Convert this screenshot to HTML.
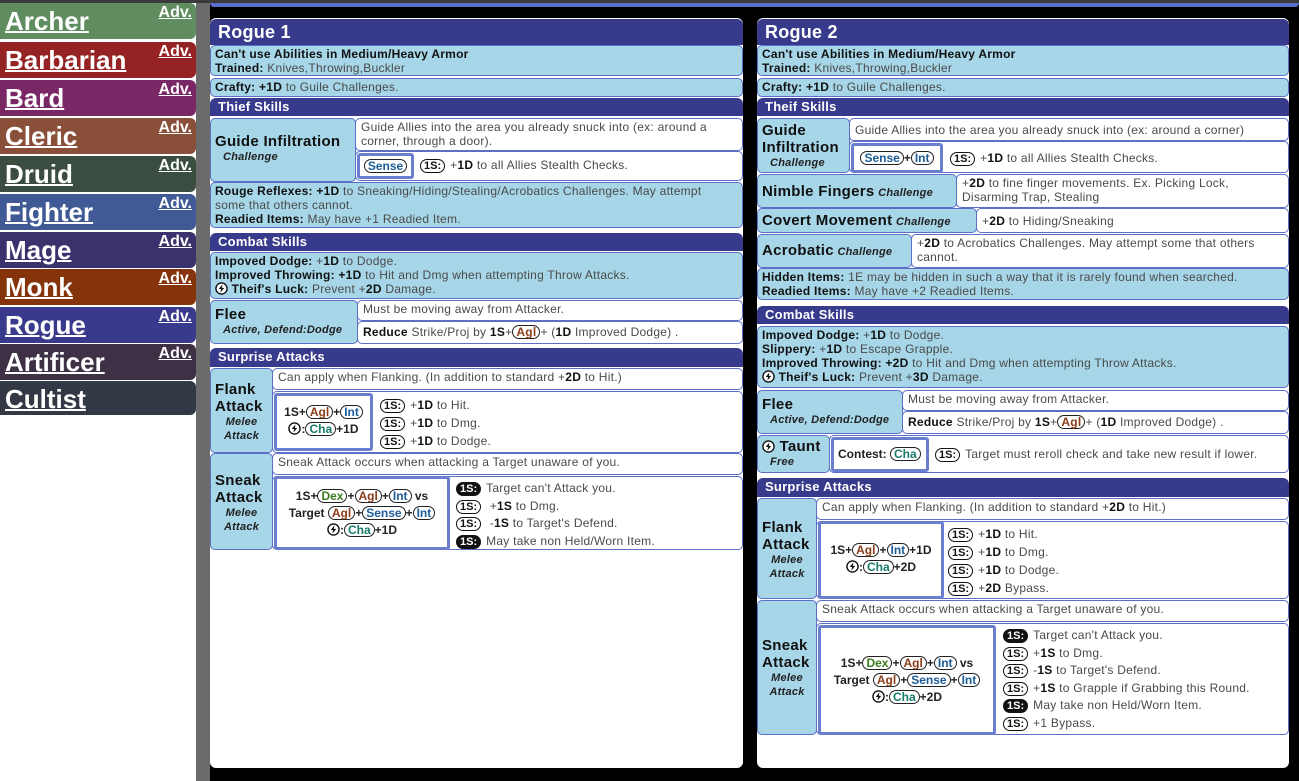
<!DOCTYPE html><html><head><meta charset="utf-8"><style>
*{box-sizing:border-box;margin:0;padding:0}
body{width:1299px;height:781px;overflow:hidden;background:#000;font-family:"Liberation Sans",sans-serif;font-size:12px;letter-spacing:0.25px;color:#4a4a4a;position:relative}
.a{position:absolute}
#side{left:0;top:0;width:196px;height:781px;background:#fff}
#gap{left:196px;top:0;width:14px;height:781px;background:#6b6b6b}
#topg{left:0;top:0;width:1299px;height:3px;background:#3a3a3a}
.it{position:absolute;left:0;width:196px;height:36px;border-radius:0 6px 6px 0;color:#fff}
.it b{position:absolute;left:5px;top:3px;font-size:26px;color:#fff;text-decoration:underline;text-decoration-thickness:2px;font-weight:bold;letter-spacing:0}
.it i{position:absolute;right:4px;top:1px;font-size:16px;font-style:normal;font-weight:bold;text-decoration:underline;letter-spacing:0}
.card{position:absolute;top:18px;height:750px;background:#fff;border-radius:6px}
.hd{position:absolute;background:#383b8c;color:#fff;font-weight:bold;font-size:13px;padding:1px 8px;border-radius:6px 6px 0 0}
.ti{font-size:18px;padding:3px 8px}
.lb{position:absolute;background:#a6d6e7;border:1px solid #5b6fc9;border-radius:5px;padding:1px 4px;line-height:14px}
.wb{position:absolute;background:#fff;border:1px solid #5b6fc9;border-radius:5px;padding:1px 5px;line-height:14px}
.fb{position:absolute;background:#fff;border:3px solid #6a7ed0;border-radius:3px;text-align:center;font-weight:bold;color:#222;line-height:17px;letter-spacing:0}
b{color:#111}
.n{font-size:15px;font-weight:bold;color:#111;line-height:17px;letter-spacing:0.3px}
.s{font-style:italic;font-weight:bold;color:#222;font-size:11px}
.p{display:inline-block;border:1.5px solid #222;border-radius:8px;padding:0 3px;line-height:12px;font-weight:bold}
.k{display:inline-block;border:1.5px solid #111;border-radius:7px;padding:0 3px;line-height:12px;font-weight:bold;color:#111;font-size:11px;margin-right:5px;letter-spacing:0}
.kf{background:#111;color:#fff}
.ag{color:#8a3c18}.in{color:#1b5c98}.ch{color:#177a6a}.dx{color:#3b7d1c}
.z{display:inline-block;width:13px;height:13px;vertical-align:-2px}
</style></head><body>
<svg width="0" height="0" style="position:absolute"><symbol id="bolt" viewBox="0 0 14 14"><circle cx="7" cy="7" r="6" fill="#fff" stroke="#111" stroke-width="1.5"/><path d="M8 2.5L4 7.6h2.6L5.8 11.5 10 6.3H7.4z" fill="#111"/></symbol></svg>
<div class="a" id="side"></div><div class="a" id="gap"></div><div class="a" id="topg"></div>
<div class="it" style="top:3px;background:#5f8d5f"><b>Archer</b><i>Adv.</i></div>
<div class="it" style="top:42px;background:#962323"><b>Barbarian</b><i>Adv.</i></div>
<div class="it" style="top:80px;background:#7a2766"><b>Bard</b><i>Adv.</i></div>
<div class="it" style="top:118px;background:#8a4f39"><b>Cleric</b><i>Adv.</i></div>
<div class="it" style="top:156px;background:#3a4d40"><b>Druid</b><i>Adv.</i></div>
<div class="it" style="top:194px;background:#3f5a95"><b>Fighter</b><i>Adv.</i></div>
<div class="it" style="top:232px;background:#3a326d"><b>Mage</b><i>Adv.</i></div>
<div class="it" style="top:269px;background:#84330b"><b>Monk</b><i>Adv.</i></div>
<div class="it" style="top:307px;background:#393a8b"><b>Rogue</b><i>Adv.</i></div>
<div class="it" style="top:344px;background:#3e3146"><b>Artificer</b><i>Adv.</i></div>
<div class="it" style="top:381px;height:34px;background:#333944"><b>Cultist</b></div>
<div class="a" style="left:210px;top:3px;width:1089px;height:4px;background:#5b6fc9;border-radius:0 0 4px 4px"></div>

<!-- CARD 1 -->
<div class="card" style="left:210px;width:533px"></div>
<div class="hd ti" style="left:210px;top:19px;width:533px;height:26px">Rogue 1</div>
<div class="lb" style="left:210px;top:45px;width:533px;height:31px"><b>Can't use Abilities in Medium/Heavy Armor</b><br><b>Trained:</b> Knives,Throwing,Buckler</div>
<div class="lb" style="left:210px;top:78px;width:533px;height:19px"><b>Crafty: +1D</b> to Guile Challenges.</div>
<div class="hd" style="left:210px;top:98px;width:533px;height:18px">Thief Skills</div>
<div class="lb" style="left:210px;top:118px;width:146px;height:64px;padding-top:14px"><div class="n">Guide Infiltration</div><div class="s" style="padding-left:8px">Challenge</div></div>
<div class="wb" style="left:355px;top:118px;width:388px;height:33px">Guide Allies into the area you already snuck into (ex: around a corner, through a door).</div>
<div class="wb" style="left:355px;top:151px;width:388px;height:30px"></div>
<div class="fb" style="left:357px;top:153px;width:57px;height:26px;padding-top:2px"><span class="p in">Sense</span></div>
<div class="a" style="left:420px;top:158px"><span class="k">1S:</span>+<b>1D</b> to all Allies Stealth Checks.</div>
<div class="lb" style="left:210px;top:182px;width:533px;height:46px;padding-right:40px"><b>Rouge Reflexes: +1D</b> to Sneaking/Hiding/Stealing/Acrobatics Challenges. May attempt some that others cannot.<br><b>Readied Items:</b> May have +1 Readied Item.</div>
<div class="hd" style="left:210px;top:233px;width:533px;height:18px">Combat Skills</div>
<div class="lb" style="left:210px;top:252px;width:533px;height:47px"><b>Impoved Dodge:</b> +<b>1D</b> to Dodge.<br><b>Improved Throwing: +1D</b> to Hit and Dmg when attempting Throw Attacks.<br><svg class="z"><use href="#bolt"/></svg> <b>Theif's Luck:</b> Prevent +<b>2D</b> Damage.</div>
<div class="lb" style="left:210px;top:300px;width:148px;height:44px;padding-top:5px"><div class="n">Flee</div><div class="s" style="padding-left:8px">Active, Defend:Dodge</div></div>
<div class="wb" style="left:357px;top:300px;width:386px;height:21px">Must be moving away from Attacker.</div>
<div class="wb" style="left:357px;top:321px;width:386px;height:23px;padding-top:3px"><b>Reduce</b> Strike/Proj by <b>1S</b>+<span class="p ag">Agl</span>+ (<b>1D</b> Improved Dodge) .</div>
<div class="hd" style="left:210px;top:348px;width:533px;height:19px">Surprise Attacks</div>
<div class="lb" style="left:210px;top:368px;width:63px;height:85px;padding-top:12px"><div class="n">Flank Attack</div><div class="s" style="text-align:center">Melee<br>Attack</div></div>
<div class="wb" style="left:272px;top:368px;width:471px;height:22px">Can apply when Flanking. (In addition to standard +<b>2D</b> to Hit.)</div>
<div class="wb" style="left:272px;top:391px;width:471px;height:62px"></div>
<div class="fb" style="left:274px;top:393px;width:99px;height:58px;padding-top:8px">1S+<span class="p ag">Agl</span>+<span class="p in">Int</span><br><svg class="z"><use href="#bolt"/></svg>:<span class="p ch">Cha</span>+1D</div>
<div class="a" style="left:380px;top:396px;line-height:18px"><span class="k">1S:</span>+<b>1D</b> to Hit.<br><span class="k">1S:</span>+<b>1D</b> to Dmg.<br><span class="k">1S:</span>+<b>1D</b> to Dodge.</div>
<div class="lb" style="left:210px;top:453px;width:63px;height:97px;padding-top:18px"><div class="n">Sneak Attack</div><div class="s" style="text-align:center">Melee<br>Attack</div></div>
<div class="wb" style="left:272px;top:453px;width:471px;height:22px">Sneak Attack occurs when attacking a Target unaware of you.</div>
<div class="wb" style="left:272px;top:476px;width:471px;height:74px"></div>
<div class="fb" style="left:274px;top:476px;width:176px;height:74px;padding-top:9px">1S+<span class="p dx">Dex</span>+<span class="p ag">Agl</span>+<span class="p in">Int</span> vs<br>Target <span class="p ag">Agl</span>+<span class="p in">Sense</span>+<span class="p in">Int</span><br><svg class="z"><use href="#bolt"/></svg>:<span class="p ch">Cha</span>+1D</div>
<div class="a" style="left:456px;top:480px;line-height:17.5px"><span class="k kf">1S:</span>Target can't Attack you.<br><span class="k">1S:</span> +<b>1S</b> to Dmg.<br><span class="k">1S:</span> -<b>1S</b> to Target's Defend.<br><span class="k kf">1S:</span>May take non Held/Worn Item.</div>

<!-- CARD 2 -->
<div class="card" style="left:757px;width:532px"></div>
<div class="hd ti" style="left:757px;top:19px;width:532px;height:26px">Rogue 2</div>
<div class="lb" style="left:757px;top:45px;width:532px;height:31px"><b>Can't use Abilities in Medium/Heavy Armor</b><br><b>Trained:</b> Knives,Throwing,Buckler</div>
<div class="lb" style="left:757px;top:78px;width:532px;height:19px"><b>Crafty: +1D</b> to Guile Challenges.</div>
<div class="hd" style="left:757px;top:98px;width:532px;height:18px">Theif Skills</div>
<div class="lb" style="left:757px;top:118px;width:93px;height:55px;padding-top:3px"><div class="n">Guide Infiltration</div><div class="s" style="padding-left:8px">Challenge</div></div>
<div class="wb" style="left:849px;top:118px;width:440px;height:23px;padding-top:4px">Guide Allies into the area you already snuck into (ex: around a corner)</div>
<div class="wb" style="left:849px;top:141px;width:440px;height:32px"></div>
<div class="fb" style="left:851px;top:143px;width:92px;height:30px;padding-top:4px"><span class="p in">Sense</span>+<span class="p in">Int</span></div>
<div class="a" style="left:950px;top:151px"><span class="k">1S:</span>+<b>1D</b> to all Allies Stealth Checks.</div>
<div class="lb" style="left:757px;top:174px;width:200px;height:34px;padding-top:8px"><span class="n">Nimble Fingers</span> <span class="s">Challenge</span></div>
<div class="wb" style="left:956px;top:174px;width:333px;height:34px;padding-right:30px">+<b>2D</b> to fine finger movements. Ex. Picking Lock, Disarming Trap, Stealing</div>
<div class="lb" style="left:757px;top:208px;width:220px;height:25px;padding-top:3px"><span class="n">Covert Movement</span> <span class="s">Challenge</span></div>
<div class="wb" style="left:976px;top:208px;width:313px;height:25px;padding-top:5px">+<b>2D</b> to Hiding/Sneaking</div>
<div class="lb" style="left:757px;top:234px;width:155px;height:34px;padding-top:7px"><span class="n">Acrobatic</span> <span class="s">Challenge</span></div>
<div class="wb" style="left:911px;top:234px;width:378px;height:34px;padding-right:20px">+<b>2D</b> to Acrobatics Challenges. May attempt some that others cannot.</div>
<div class="lb" style="left:757px;top:268px;width:532px;height:32px"><b>Hidden Items:</b> 1E may be hidden in such a way that it is rarely found when searched.<br><b>Readied Items:</b> May have +2 Readied Items.</div>
<div class="hd" style="left:757px;top:306px;width:532px;height:18px">Combat Skills</div>
<div class="lb" style="left:757px;top:326px;width:532px;height:62px"><b>Impoved Dodge:</b> +<b>1D</b> to Dodge.<br><b>Slippery:</b> +<b>1D</b> to Escape Grapple.<br><b>Improved Throwing: +2D</b> to Hit and Dmg when attempting Throw Attacks.<br><svg class="z"><use href="#bolt"/></svg> <b>Theif's Luck:</b> Prevent +<b>3D</b> Damage.</div>
<div class="lb" style="left:757px;top:390px;width:146px;height:44px;padding-top:5px"><div class="n">Flee</div><div class="s" style="padding-left:8px">Active, Defend:Dodge</div></div>
<div class="wb" style="left:902px;top:390px;width:387px;height:21px">Must be moving away from Attacker.</div>
<div class="wb" style="left:902px;top:411px;width:387px;height:23px;padding-top:3px"><b>Reduce</b> Strike/Proj by <b>1S</b>+<span class="p ag">Agl</span>+ (<b>1D</b> Improved Dodge) .</div>
<div class="lb" style="left:757px;top:435px;width:73px;height:38px;padding-top:2px"><div class="n"><svg class="z"><use href="#bolt"/></svg> Taunt</div><div class="s" style="padding-left:8px">Free</div></div>
<div class="wb" style="left:829px;top:435px;width:460px;height:38px"></div>
<div class="fb" style="left:831px;top:437px;width:98px;height:35px;padding-top:6px;text-align:left;padding-left:4px">Contest: <span class="p ch">Cha</span></div>
<div class="a" style="left:935px;top:447px"><span class="k">1S:</span>Target must reroll check and take new result if lower.</div>
<div class="hd" style="left:757px;top:478px;width:532px;height:19px">Surprise Attacks</div>
<div class="lb" style="left:757px;top:498px;width:60px;height:101px;padding-top:20px"><div class="n">Flank Attack</div><div class="s" style="text-align:center">Melee<br>Attack</div></div>
<div class="wb" style="left:816px;top:498px;width:473px;height:22px">Can apply when Flanking. (In addition to standard +<b>2D</b> to Hit.)</div>
<div class="wb" style="left:816px;top:521px;width:473px;height:78px"></div>
<div class="fb" style="left:818px;top:521px;width:126px;height:78px;padding-top:18px">1S+<span class="p ag">Agl</span>+<span class="p in">Int</span>+1D<br><svg class="z"><use href="#bolt"/></svg>:<span class="p ch">Cha</span>+2D</div>
<div class="a" style="left:948px;top:525px;line-height:18px"><span class="k">1S:</span>+<b>1D</b> to Hit.<br><span class="k">1S:</span>+<b>1D</b> to Dmg.<br><span class="k">1S:</span>+<b>1D</b> to Dodge.<br><span class="k">1S:</span>+<b>2D</b> Bypass.</div>
<div class="lb" style="left:757px;top:600px;width:60px;height:135px;padding-top:36px"><div class="n">Sneak Attack</div><div class="s" style="text-align:center">Melee<br>Attack</div></div>
<div class="wb" style="left:816px;top:600px;width:473px;height:22px">Sneak Attack occurs when attacking a Target unaware of you.</div>
<div class="wb" style="left:816px;top:623px;width:473px;height:112px"></div>
<div class="fb" style="left:818px;top:625px;width:178px;height:110px;padding-top:27px">1S+<span class="p dx">Dex</span>+<span class="p ag">Agl</span>+<span class="p in">Int</span> vs<br>Target <span class="p ag">Agl</span>+<span class="p in">Sense</span>+<span class="p in">Int</span><br><svg class="z"><use href="#bolt"/></svg>:<span class="p ch">Cha</span>+2D</div>
<div class="a" style="left:1003px;top:627px;line-height:17.5px"><span class="k kf">1S:</span>Target can't Attack you.<br><span class="k">1S:</span>+<b>1S</b> to Dmg.<br><span class="k">1S:</span>-<b>1S</b> to Target's Defend.<br><span class="k">1S:</span>+<b>1S</b> to Grapple if Grabbing this Round.<br><span class="k kf">1S:</span>May take non Held/Worn Item.<br><span class="k">1S:</span>+1 Bypass.</div>
</body></html>
